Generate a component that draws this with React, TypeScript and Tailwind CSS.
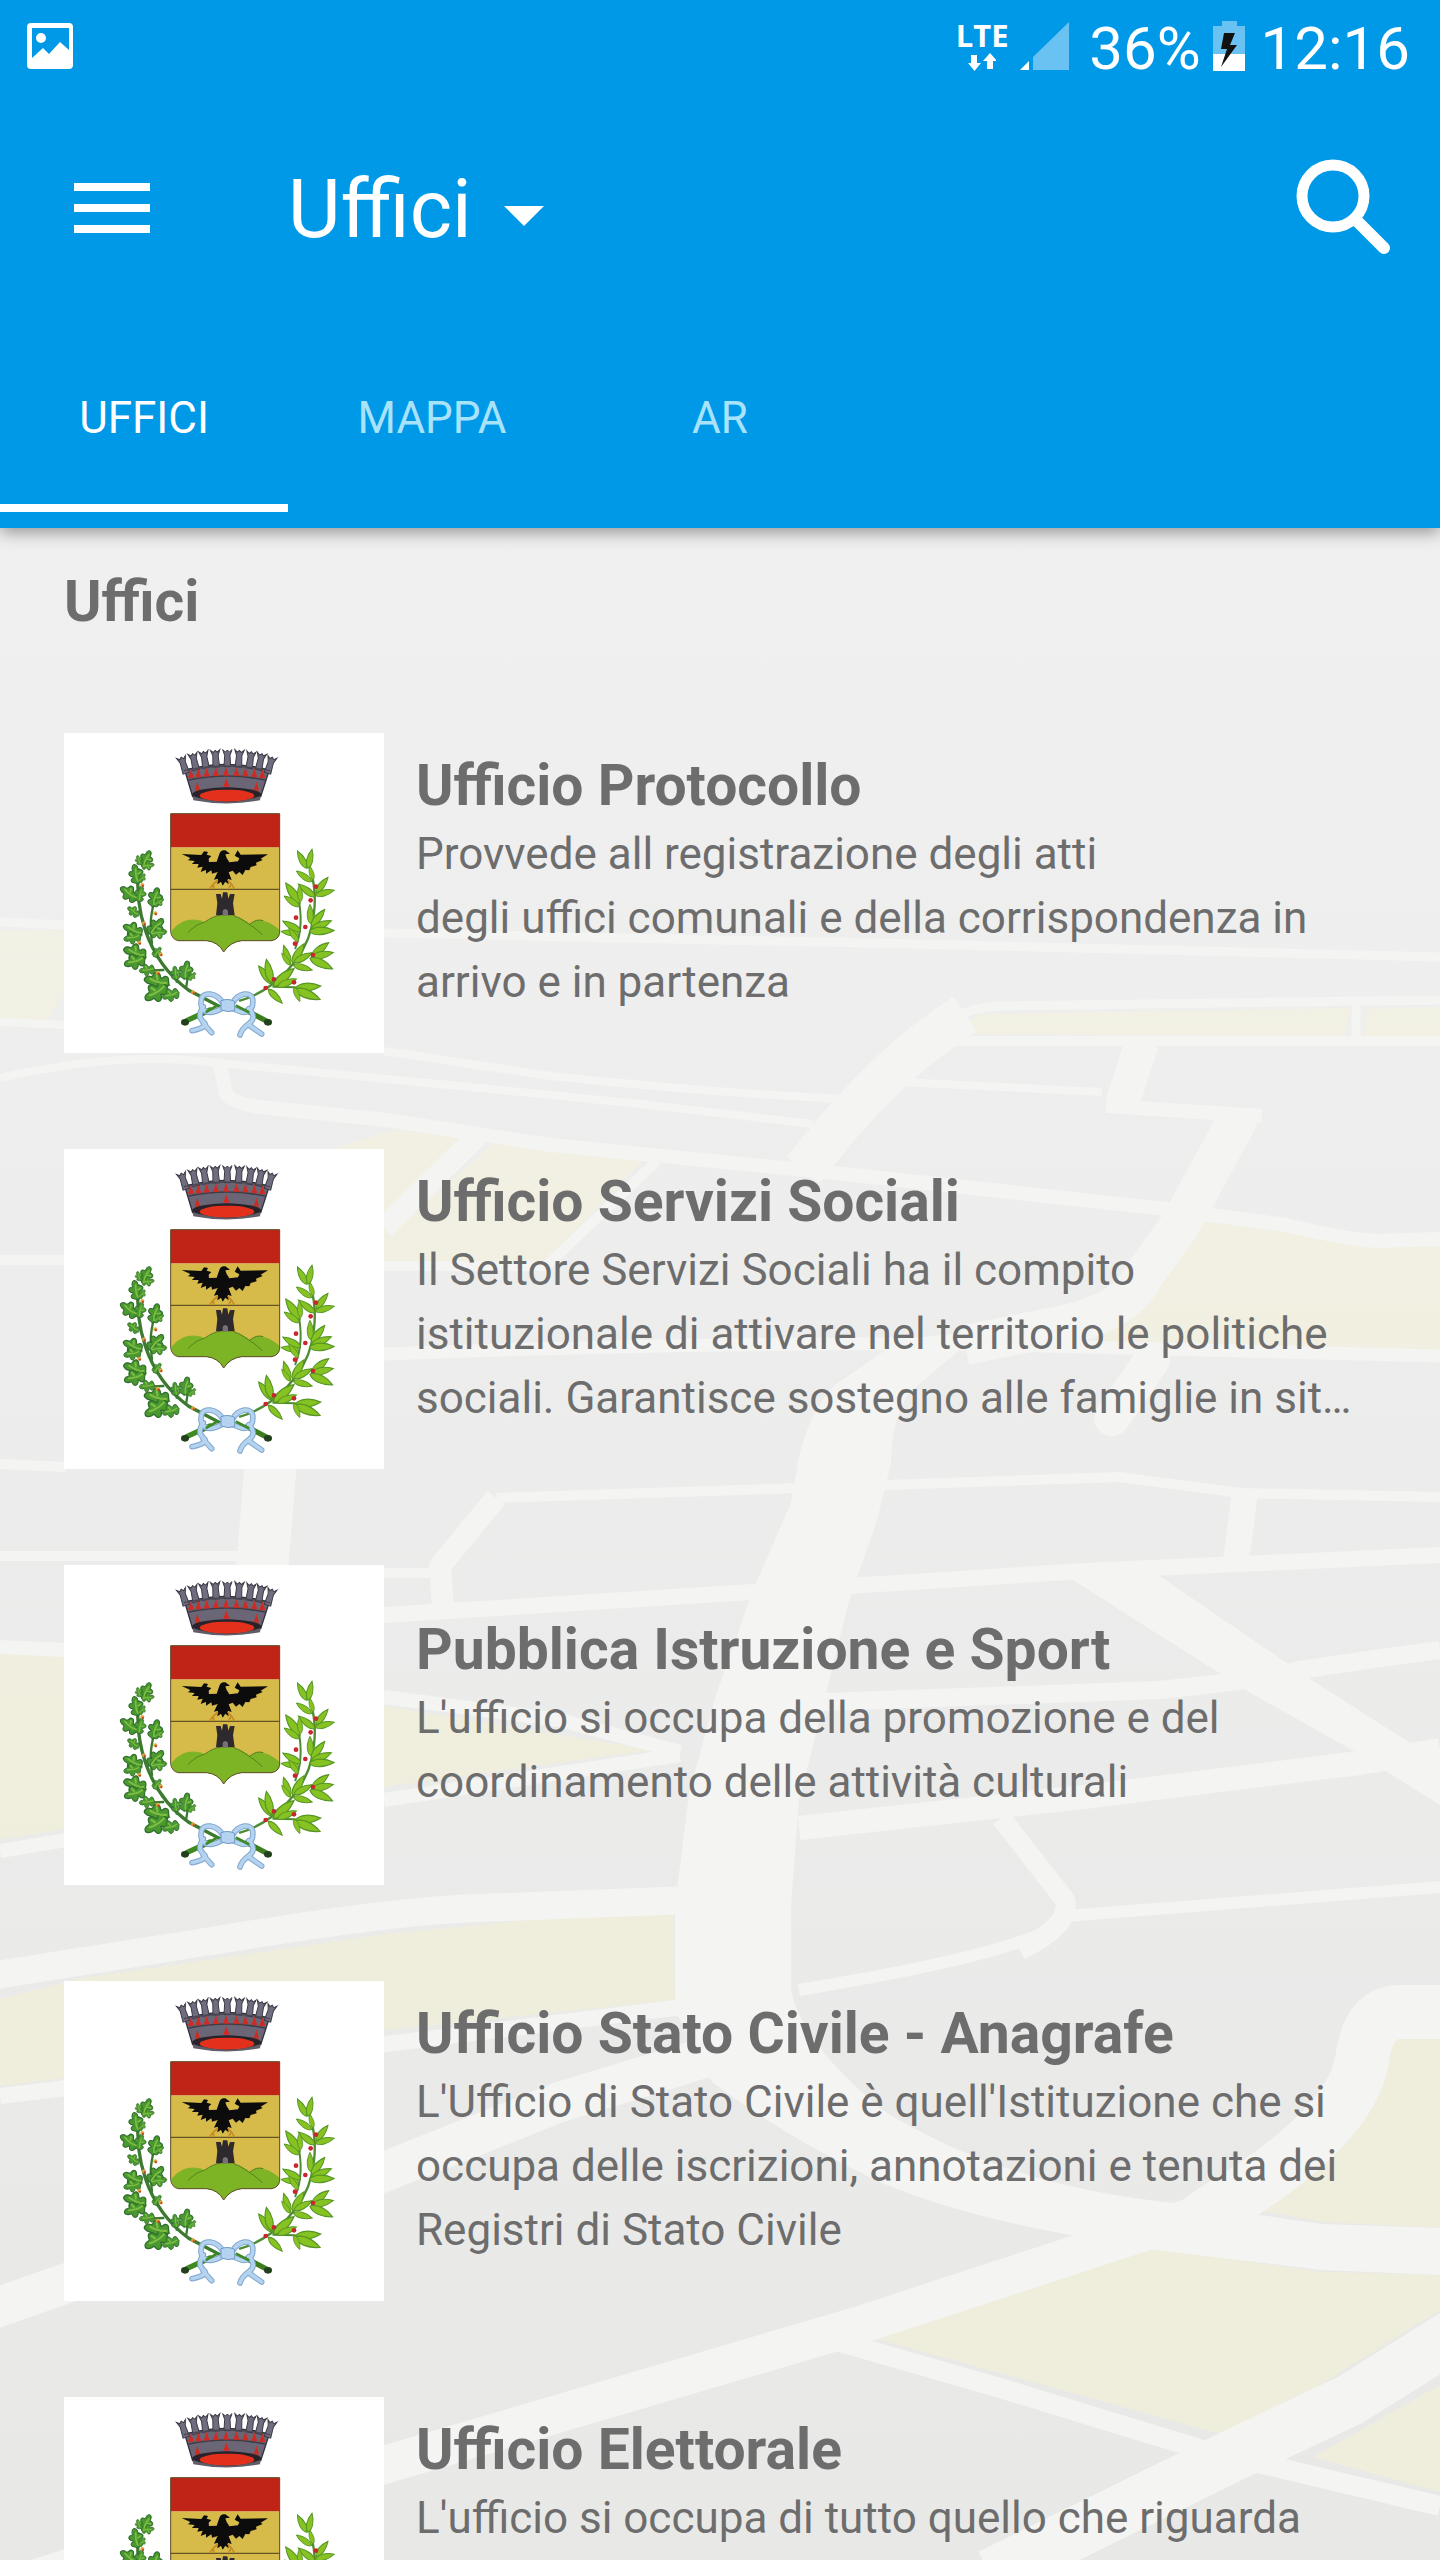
import { useState } from 'react';
import clsx from 'clsx';

type Office = {
  id: number;
  name: string;
  description: string;
  fullHeight?: boolean;
};

type Leaf = [x: number, y: number, angle: number, scale: number];

const TABS = ['Uffici', 'Mappa', 'AR'];

const OFFICES: Office[] = [
  {
    id: 1,
    name: 'Ufficio Protocollo',
    description:
      'Provvede all registrazione degli atti\ndegli uffici comunali e della corrispondenza in arrivo e in partenza',
  },
  {
    id: 2,
    name: 'Ufficio Servizi Sociali',
    description:
      'Il Settore Servizi Sociali ha il compito istituzionale di attivare nel territorio le politiche sociali. Garantisce sostegno alle famiglie in sit…',
  },
  {
    id: 3,
    name: 'Pubblica Istruzione e Sport',
    description:
      "L'ufficio si occupa della promozione e del coordinamento delle attività culturali",
  },
  {
    id: 4,
    name: 'Ufficio Stato Civile - Anagrafe',
    description:
      "L'Ufficio di Stato Civile è quell'Istituzione che si occupa delle iscrizioni, annotazioni e tenuta dei Registri di Stato Civile",
  },
  {
    id: 5,
    name: 'Ufficio Elettorale',
    description: "L'ufficio si occupa di tutto quello che riguarda",
    fullHeight: true,
  },
];

const OAK_LEAVES: Leaf[] = [
  [246, 410, 28, 0.9],
  [244, 408, 85, 0.65],
  [240, 405, -15, 0.5],
  [232, 462, -8, 1],
  [236, 455, 40, 0.5],
  [232, 510, -52, 1.05],
  [234, 515, 15, 0.8],
  [236, 558, -50, 0.7],
  [246, 615, -62, 1.05],
  [244, 618, -100, 0.9],
  [276, 530, 18, 1],
  [280, 525, 60, 0.6],
  [266, 612, 45, 1.05],
  [270, 610, 85, 0.85],
  [280, 680, 40, 0.6],
  [258, 682, -68, 1.2],
  [256, 686, -105, 1.1],
  [285, 718, -95, 0.8],
  [328, 765, -75, 1.3],
  [322, 768, -120, 1.3],
  [348, 750, -5, 0.7],
  [372, 748, 12, 0.95],
  [384, 748, 50, 0.5],
  [358, 788, -105, 0.9],
];

const LAUREL_LEAVES: Leaf[] = [
  [740, 415, -28, 0.95],
  [744, 415, 12, 0.95],
  [755, 455, -55, 0.9],
  [760, 450, -15, 0.7],
  [764, 500, -52, 1],
  [768, 488, 38, 0.95],
  [766, 496, 75, 0.95],
  [720, 520, -35, 1.2],
  [718, 530, -55, 0.9],
  [722, 515, -5, 0.8],
  [752, 582, -2, 0.95],
  [754, 590, 38, 1.05],
  [752, 600, 66, 1.1],
  [748, 604, 88, 1.2],
  [722, 604, -60, 1],
  [718, 612, -82, 0.9],
  [715, 635, -35, 0.8],
  [690, 705, -18, 1],
  [690, 705, -35, 0.7],
  [698, 700, 30, 1.1],
  [702, 697, 62, 1],
  [700, 705, 105, 0.95],
  [755, 678, 52, 1.05],
  [753, 682, 78, 1.1],
  [750, 685, 115, 1.2],
  [638, 762, -38, 1.1],
  [634, 758, -12, 1.15],
  [640, 768, 50, 1.3],
  [652, 770, 68, 1],
  [625, 778, 135, 0.95],
  [705, 775, 85, 1.25],
  [705, 778, 112, 1.3],
  [702, 772, 158, 0.75],
];

const OAK_BERRIES = [
  [247, 465],
  [286, 550],
  [252, 580],
  [238, 638],
  [302, 673],
  [293, 728],
  [399, 787],
];

const LAUREL_BERRIES = [
  [768, 470],
  [752, 511],
  [708, 563],
  [736, 591],
  [705, 641],
  [759, 675],
  [642, 748],
  [702, 757],
  [617, 774],
];

const BATTLEMENTS: Leaf[] = [
  [375, 118, -18, 1],
  [406, 108, -13, 1],
  [436, 102, -9, 1],
  [468, 99, -4, 1],
  [502, 98, 0, 1],
  [536, 99, 4, 1],
  [569, 103, 8, 1],
  [598, 108, 12, 1],
  [626, 118, 17, 1],
];

const place = ([x, y, angle, scale]: Leaf) =>
  `translate(${x} ${y}) rotate(${angle}) scale(${scale})`;

const MapBackground = () => (
  <svg
    className="absolute inset-0 h-full w-full"
    viewBox="0 528 1440 2032"
    preserveAspectRatio="none"
    aria-hidden="true"
  >
    <defs>
      <linearGradient id="ground" x1="0" y1="0" x2="0" y2="1">
        <stop offset="0" stopColor="#f0f0f0" />
        <stop offset="1" stopColor="#e8e8e7" />
      </linearGradient>
      <linearGradient id="park" gradientUnits="userSpaceOnUse" x1="0" y1="900" x2="0" y2="2000">
        <stop offset="0" stopColor="#f2f1e5" />
        <stop offset="1" stopColor="#efeddb" />
      </linearGradient>
    </defs>
    <rect x="0" y="528" width="1440" height="2032" fill="url(#ground)" />

    {/* Parks */}
    <g fill="url(#park)">
      <path d="M0 930H66V990L48 1020H0Z" />
      <path d="M980 1014L1350 1008L1345 1036L955 1034Z" />
      <path d="M1368 1009L1440 1007V1040L1364 1037Z" />
      <path d="M330 1150L394 1130L460 1137L384 1240V1262H330Z" />
      <path d="M498 1140L645 1158L546 1262H384V1240L410 1215Z" />
      <path d="M1203 1221L1377 1245H1440V1350L1093 1342L1140 1310Z" />
      <path d="M0 1650L66 1655V1829L0 1839Z" />
      <path d="M384 1706L652 1750L384 1787Z" />
      <path d="M0 1999L83 1978L386 1934L551 1918L673 1913L675 2000L386 2030L66 2078L0 2086Z" />
      <path d="M1400 2024L1440 2016V2228L1322 2222L1258 2210L1350 2140Z" />
      <path d="M863 2335L1139 2246L1322 2272L1440 2275V2310L1235 2438Z" />
      <path d="M1440 2385L1313 2457L1440 2492Z" />
    </g>

    {/* Streets */}
    <g fill="none" stroke="#f4f4f3" strokeLinejoin="round">
      <path strokeWidth="9" d="M0 922L64 925L385 933L960 945L1440 957" />
      <path strokeWidth="8" d="M0 1022L66 1025M0 1078Q120 1050 220 1063L460 1086L640 1104L813 1124" />
      <path strokeWidth="8" d="M384 1051L551 1076Q700 1092 845 1099" />
      <path strokeWidth="14" d="M220 1064L226 1093Q230 1103 260 1107L386 1120L551 1145L826 1172L1166 1209L1286 1225Q1350 1240 1377 1241L1440 1239" />
      <path strokeWidth="22" d="M477 1136L384 1228" />
      <path strokeWidth="10" d="M657 1161L544 1268M384 1266H551M0 1260H66" />
      <path strokeWidth="9" d="M950 1022Q965 1008 1000 1006L1440 1000M1356 1006V1040" />
      <path strokeWidth="10" d="M945 1041H1440" />
      <path strokeWidth="42" d="M965 1014C910 1050 875 1085 840 1125L803 1170" />
      <path strokeWidth="8" d="M900 1082L1102 1092" />
      <path strokeWidth="34" d="M1142 1042L1122 1105" />
      <path strokeWidth="14" d="M1106 1106L1262 1116" />
      <path strokeWidth="40" d="M1240 1115L1180 1225L1144 1275Q1125 1315 1050 1328L965 1345" />
      <path strokeWidth="13" d="M384 1354Q700 1342 965 1344L1440 1356" />
      <path strokeWidth="36" strokeLinecap="round" d="M1152 1360L1112 1418" />

      <path strokeWidth="10" d="M0 1464L66 1467M0 1556H270M384 1573H436" />
      <path strokeWidth="52" d="M271 1460L262 1570" />
      <path strokeWidth="10" d="M496 1498L800 1488L1120 1477L1240 1493L1440 1497" />
      <path strokeWidth="22" d="M496 1498L440 1566L443 1606" />
      <path strokeWidth="26" d="M1245 1492L1235 1568" />
      <path strokeWidth="16" d="M384 1615L753 1592L1084 1571L1440 1555" />
      <path strokeWidth="18" d="M799 1703L1160 1690Q1260 1680 1300 1670Q1400 1655 1440 1650" />
      <path strokeWidth="24" d="M799 1828L1084 1797L1359 1763L1440 1750" />
      <path strokeWidth="14" d="M384 1697L560 1720L680 1752M384 1800L680 1755M0 1647L66 1650M0 1851L66 1840" />
      <path strokeWidth="20" d="M1001 1818L1065 1900Q1072 1925 1020 1950" />
      <path strokeWidth="12" d="M1060 1920Q1040 1950 799 1990M1065 1916L1440 1887" />
      <path strokeWidth="28" d="M-10 1976L230 1938Q400 1910 480 1908L690 1900" />
      <path strokeWidth="16" d="M0 2096L66 2088L386 2044L690 2006" />
      <path strokeWidth="40" d="M730 2050L560 2102L384 2172L-10 2310" />
      <path strokeWidth="54" d="M1450 2012H1400Q1368 2012 1362 2060Q1350 2130 1215 2210L1190 2228" />
      <path strokeWidth="38" d="M1200 2214L1120 2240L860 2325L384 2465L0 2590" />
      <path strokeWidth="52" d="M1470 2325L1350 2400L1240 2452L990 2575" />
      <path strokeWidth="20" d="M826 2338L1000 2388L1203 2450L1440 2506" />
    </g>
    <path fill="#f4f4f3" d="M1065 1575L1148 1568L1313 1681L1440 1762V1805L1354 1751L1249 1692Z" />

    {/* Main avenue */}
    <path
      fill="#f4f4f3"
      d="M983 1330L909 1393Q891 1420 891 1464L877 1520L849 1601L817 1730L799 1800L791 1906L791 1989Q799 2040 881 2109Q1000 2185 1175 2203L1322 2224L1440 2228V2275L1322 2270L1139 2248L1065 2234Q960 2215 882 2183Q790 2140 712 2082L675 2010V1906L689 1794L716 1695L753 1590L791 1503L799 1457Q810 1410 835 1385L900 1340Z"
    />
  </svg>
);

const Crest = () => (
  <svg
    className="size-80 shrink-0 bg-white"
    viewBox="12 9 960 960"
    role="img"
    aria-label="Stemma del comune"
  >
    {/* Crown */}
    <path d="M374 120Q500 86 628 120L602 200Q500 232 398 200Z" fill="#6a6675" stroke="#34313c" strokeWidth="4" />
    {BATTLEMENTS.map((b) => (
      <path
        key={b[0]}
        transform={place(b)}
        d="M-14 -39L-6 -32L0 -38L6 -32L14 -39L8 -22L10 12H-10L-8 -22Z"
        fill="#716d80"
        stroke="#3c3945"
        strokeWidth="3"
      />
    ))}
    <path d="M372 122Q500 94 630 122" fill="none" stroke="#4a4753" strokeWidth="4" />
    <path d="M386 150Q500 126 616 150" fill="none" stroke="#3f3c47" strokeWidth="5" />
    <g fill="#d12a22">
      {[393, 415, 440, 468, 498, 529, 556, 583, 607].map((x) => (
        <path
          key={x}
          transform={`translate(${x} ${126 + Math.pow((x - 500) / 40, 2)})`}
          d="M0 -14L9 11H-9Z"
        />
      ))}
      <path d="M499 146L509 170H489ZM411 156L421 182H404ZM590 156L597 182H580Z" />
    </g>
    <ellipse cx="500" cy="194" rx="104" ry="22" fill="#28232a" />
    <ellipse cx="501" cy="197" rx="82" ry="18" fill="#e2301c" />
    <path d="M398 198Q500 232 602 198L600 211Q500 230 400 211Z" fill="#615d68" />

    {/* Shield */}
    <path d="M332 352H659V610Q655 628 635 632H545Q510 636 491 666Q475 636 440 632H355Q335 628 332 605Z" fill="#d6bb4a" />
    <path d="M332 251H659V352H332Z" fill="#bf2417" />
    <path d="M334 603Q365 565 405 569Q425 569 433 577Q460 558 480 556H520Q550 566 570 582Q590 565 610 572Q640 580 658 600V612Q655 628 635 632H545Q510 636 491 666Q475 636 440 632H355Q337 628 334 603Z" fill="#7db425" />
    <path d="M384 608Q408 582 433 577Q460 558 480 556M520 556Q560 572 608 614M570 582Q590 565 610 572" fill="none" stroke="#587f22" strokeWidth="3" />
    <path d="M332 478H659" stroke="#6a5423" strokeWidth="4" />
    <path d="M468 556L472 520L468 492H482L486 506L489 487H502L505 506L510 492H524L519 520L524 556Z" fill="#2e292d" />
    <path d="M488 556V542Q496 532 504 542V556Z" fill="#76707a" />
    <path
      d="M365 372L424 375L432 364L444 366L440 374L454 378L446 386L447 396L470 395L478 372Q482 358 496 361L510 371L496 373L500 384L508 397L534 394L538 385L524 377L533 361L542 374L624 373L602 386L608 390L588 398L590 406L572 411L568 421L556 420L548 435L538 426L528 434L518 422L506 427L515 450L503 446L506 463L496 455L488 467L483 455L472 463L474 446L462 449L473 426L456 431L454 421L438 431L438 420L422 426L428 410L412 413L416 402L396 402L404 393L384 391L391 384Z"
      fill="#0d0c0c"
    />
    <path d="M474 450L460 462L449 476M460 462L462 476M503 450L514 462L523 476M514 462L506 476" fill="none" stroke="#c98a20" strokeWidth="5" />
    <path d="M332 251H659V610Q655 628 635 632H545Q510 636 491 666Q475 636 440 632H355Q335 628 332 605Z" fill="none" stroke="#5d4a28" strokeWidth="3" />

    {/* Oak branch */}
    <g fill="none" stroke="#3c7a30" strokeLinecap="round">
      <path strokeWidth="10" d="M236 420C225 520 250 680 385 780L480 830" />
      <path strokeWidth="7" d="M292 490C268 550 270 590 276 640M350 755L350 730M378 775L385 730M310 720L265 722" />
      <path strokeWidth="16" d="M560 842L625 876" stroke="#3d7d22" />
    </g>
    <g fill="#4a982f" stroke="#2f6b2c" strokeWidth="3">
      {OAK_LEAVES.map((leaf, i) => (
        <path
          key={i}
          transform={place(leaf)}
          d="M0 0C-4 -6 -16 -2 -17 -12C-18 -19 -8 -19 -9 -22C-11 -24 -22 -24 -21 -34C-20 -42 -10 -38 -9 -42C-11 -54 -4 -62 2 -58C8 -56 8 -48 8 -44C10 -40 20 -44 22 -35C23 -26 12 -26 10 -22C10 -18 19 -18 17 -10C15 -2 5 -6 0 0Z"
        />
      ))}
    </g>
    <g fill="none" stroke="#7cbf42" strokeWidth="5" strokeLinecap="round">
      {OAK_LEAVES.map((leaf, i) => (
        <path key={i} transform={place(leaf)} d="M3 -8Q-3 -24 2 -46M6 -30L14 -34" />
      ))}
    </g>
    {OAK_BERRIES.map(([x, y]) => (
      <g key={x}>
        <circle cx={x} cy={y} r="6" fill="#d9a441" />
        <circle cx={x + 2} cy={y + 3} r="3" fill="#c4302b" />
      </g>
    ))}

    {/* Laurel branch */}
    <g fill="none" stroke="#4d8c33" strokeLinecap="round">
      <path strokeWidth="7" d="M540 812C650 780 735 680 755 590C770 520 768 460 742 390" />
      <path strokeWidth="6" d="M706 655C728 600 724 540 712 490M640 762L632 730M640 770L705 772" />
      <path strokeWidth="16" d="M450 840L380 872" stroke="#3f8a24" />
    </g>
    <g fill="#86c222" stroke="#569524" strokeWidth="3">
      {LAUREL_LEAVES.map((leaf, i) => (
        <path key={i} transform={place(leaf)} d="M0 0C-13 -12 -13 -38 0 -62C12 -38 13 -12 0 0Z" />
      ))}
    </g>
    <g fill="#c9252e">
      {LAUREL_BERRIES.map(([x, y]) => (
        <circle key={x} cx={x} cy={y} r="7" />
      ))}
    </g>
    <ellipse cx="375" cy="877" rx="12" ry="10" fill="#23401d" />
    <ellipse cx="624" cy="877" rx="12" ry="10" fill="#23401d" />

    {/* Ribbon */}
    <g fill="none" strokeLinejoin="round" strokeLinecap="round">
      <g stroke="#7fa6cf" strokeWidth="17">
        <path d="M490 822C470 785 428 785 424 808C418 840 440 862 488 834" />
        <path d="M516 822C536 785 574 785 578 808C582 840 560 862 518 834" />
        <path d="M430 830Q410 860 430 875T396 902M430 880L455 908" />
        <path d="M566 836Q592 862 568 880T540 915M568 886L605 912" />
      </g>
      <g stroke="#b4d3ef" strokeWidth="11">
        <path d="M490 822C470 785 428 785 424 808C418 840 440 862 488 834" />
        <path d="M516 822C536 785 574 785 578 808C582 840 560 862 518 834" />
        <path d="M430 830Q410 860 430 875T396 902M430 880L455 908" />
        <path d="M566 836Q592 862 568 880T540 915M568 886L605 912" />
      </g>
    </g>
    <path d="M440 845L470 828M530 828L565 846" stroke="#3f8a24" strokeWidth="8" strokeLinecap="round" />
    <path d="M483 812Q503 804 524 814V842Q503 848 483 840Z" fill="#b3d3f0" stroke="#6f97c4" strokeWidth="3" />
  </svg>
);

const StatusBar = () => (
  <div className="flex h-24 items-center justify-between pr-[30px] pl-[27px] text-[60px]">
    <svg className="mb-1 h-[46px] w-[46px]" viewBox="0 0 46 46" aria-label="Screenshot">
      <path
        fill="#fff"
        fillRule="evenodd"
        d="M4 0H42Q46 0 46 4V42Q46 46 42 46H4Q0 46 0 42V4Q0 0 4 0ZM5 5V35L16 25L22 31L33 19L42 27V5ZM14 10A5 5 0 1 1 14 20A5 5 0 1 1 14 10Z"
      />
    </svg>
    <div className="flex items-center">
      <div className="mb-1 flex w-[52px] flex-col items-center gap-1">
        <span className="font-['Open_Sans'] text-[31px] leading-7 font-bold">LTE</span>
        <svg className="h-[18px] w-7" viewBox="0 0 28 18" fill="#fff" aria-hidden="true">
          <path d="M3 2H9V10H13L6.500 18L0 10H3ZM19 16H25V8H29L22 0L15 8H19Z" />
        </svg>
      </div>
      <svg className="mb-1 ml-3 h-12 w-[49px]" viewBox="0 0 49 48" aria-label="Segnale">
        <path d="M0 48L9 39V48Z" fill="#fff" />
        <path d="M13 48V35L49 0V48Z" fill="#69c2f2" />
      </svg>
      <span className="mt-0.5 ml-5">36%</span>
      <svg className="mb-1 ml-3 h-[50px] w-8" viewBox="0 0 32 50" aria-label="Batteria in carica">
        <path d="M9 0H24V5H32V34H0V5H9Z" fill="#69c2f2" />
        <path d="M0 33H32V50H0Z" fill="#fff" />
        <path d="M11 12H22L17 24H24L8 46L14 28H8Z" fill="#111" />
      </svg>
      <span className="mt-0.5 ml-4">12:16</span>
    </div>
  </div>
);

const OfficeRow = ({ office }: { office: Office }) => (
  <li className="flex items-center gap-8">
    <Crest />
    <div className="min-w-0 flex-1 pb-[18px]">
      <h2 className="mb-1 text-[57px] leading-[64px] font-bold">{office.name}</h2>
      <p
        className={clsx(
          'line-clamp-3 text-[44px] leading-[64px] whitespace-pre-line',
          office.fullHeight && 'min-h-48'
        )}
      >
        {office.description}
      </p>
    </div>
  </li>
);

export default function App() {
  const [activeTab, setActiveTab] = useState('Uffici');

  return (
    <div className="flex h-screen flex-col overflow-hidden bg-[#f0f0f0] font-[Roboto,sans-serif] text-[#6d6d6d]">
      <header className="relative z-10 bg-[#0099e8] pb-4 text-white shadow-[0_4px_16px_rgba(0,0,0,0.4)]">
        <StatusBar />

        <div className="flex h-56 items-center pr-12 pl-[74px]">
          <button type="button" aria-label="Menu" className="flex w-[76px] flex-col gap-[13px]">
            <span className="h-2 w-full bg-white" />
            <span className="h-2 w-full bg-white" />
            <span className="h-2 w-full bg-white" />
          </button>

          <label className="ml-[138px] flex items-center pt-1">
            <select
              aria-label="Sezione"
              className="field-sizing-content h-28 appearance-none bg-transparent text-[81px] leading-[112px] outline-none"
            >
              <option>Uffici</option>
            </select>
            <svg className="mt-3 ml-8 h-5 w-10" viewBox="0 0 40 20" fill="#fff" aria-hidden="true">
              <path d="M0 0H40L20 20Z" />
            </svg>
          </label>

          <button type="button" aria-label="Cerca" className="ml-auto pb-1">
            <svg className="h-24 w-24" viewBox="0 0 96 96" fill="none" stroke="#fff" aria-hidden="true">
              <circle cx="37" cy="38" r="31" strokeWidth="11" />
              <path d="M59 61L88 90" strokeWidth="12" strokeLinecap="round" />
            </svg>
          </button>
        </div>

        <nav className="flex" role="tablist">
          {TABS.map((tab) => (
            <button
              key={tab}
              type="button"
              role="tab"
              aria-selected={activeTab === tab}
              onClick={() => setActiveTab(tab)}
              className={clsx(
                'h-48 w-1/5 border-b-8 pt-3 text-[44px] uppercase',
                activeTab === tab
                  ? 'border-b-white text-white'
                  : 'border-b-transparent text-[#a8e2fb]'
              )}
            >
              {tab}
            </button>
          ))}
        </nav>
      </header>

      <main className="relative min-h-0 flex-1 overflow-hidden">
        <MapBackground />
        <div className="relative px-16 pt-10">
          <h1 className="text-[57px] leading-[68px] font-bold">Uffici</h1>
          <ul className="mt-[97px] flex flex-col gap-24">
            {OFFICES.map((office) => (
              <OfficeRow key={office.id} office={office} />
            ))}
          </ul>
        </div>
      </main>
    </div>
  );
}
